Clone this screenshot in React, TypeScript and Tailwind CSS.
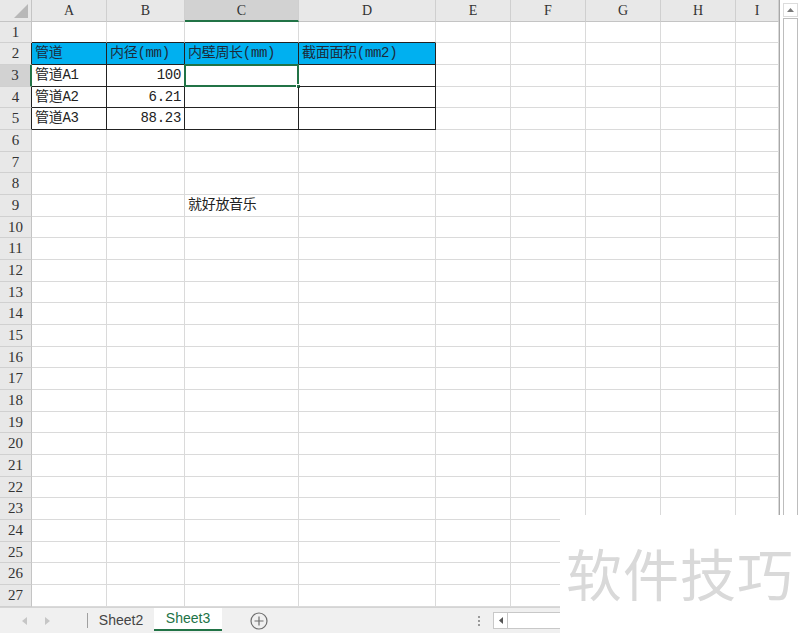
import React from "react";

const cols = [
  { id: "A", w: "w-[75px]" },
  { id: "B", w: "w-[78px]" },
  { id: "C", w: "w-[114px]" },
  { id: "D", w: "w-[137px]" },
  { id: "E", w: "w-[75px]" },
  { id: "F", w: "w-[75px]" },
  { id: "G", w: "w-[75px]" },
  { id: "H", w: "w-[75px]" },
  { id: "I", w: "w-[43px]" },
];

type Cell = { text: string; align?: "right" };

const data: Record<number, Record<string, Cell>> = {
  2: {
    A: { text: "管道" },
    B: { text: "内径(mm)" },
    C: { text: "内壁周长(mm)" },
    D: { text: "截面面积(mm2)" },
  },
  3: { A: { text: "管道A1" }, B: { text: "100", align: "right" } },
  4: { A: { text: "管道A2" }, B: { text: "6.21", align: "right" } },
  5: { A: { text: "管道A3" }, B: { text: "88.23", align: "right" } },
  9: { C: { text: "就好放音乐" } },
};

const font = "font-['Liberation_Serif','Noto_Sans_CJK_SC',serif]";
const cellFont = "font-['Liberation_Mono','Noto_Sans_CJK_SC',monospace]";
const tableCols = ["A", "B", "C", "D"];

function Row({ n }: { n: number }) {
  const h = n % 3 === 1 ? "h-[21px]" : "h-[22px]";
  const inTable = n >= 2 && n <= 5;
  const rowSelected = n === 3;
  return (
    <div className={`flex ${h}`}>
      <div
        className={`w-[32px] shrink-0 flex items-center justify-center text-[15px] text-[#333] border-b border-[#d0d0d0] ${
          rowSelected ? "bg-[#d2d2d2] border-r-2 border-r-[#217346]" : "bg-[#e8e8e8] border-r"
        } ${!rowSelected && inTable ? "border-r-[#222]" : !rowSelected ? "border-r-[#c4c4c4]" : ""}`}
      >
        {n}
      </div>
      {cols.map((c) => {
        const cell = data[n]?.[c.id];
        const isTable = inTable && tableCols.includes(c.id);
        const aboveTable = n === 1 && tableCols.includes(c.id);
        const isHead = n === 2 && isTable;
        const selected = n === 3 && c.id === "C";
        return (
          <div
            key={c.id}
            className={`${c.w} shrink-0 relative flex items-center px-[3px] text-[14px] tracking-[-0.3px] whitespace-nowrap border-r border-b ${cellFont} ${
              isTable ? "border-[#222]" : "border-[#dadada]"
            } ${aboveTable ? "border-b-[#222]" : ""} ${isHead ? "bg-[#00b0f0] text-[#1c2b3a]" : "text-[#222]"} ${
              cell?.align === "right" ? "justify-end" : ""
            }`}
          >
            {cell?.text}
            {selected && (
              <div className="absolute -left-px -top-px -right-px -bottom-px border-2 border-[#217346]">
                <div className="absolute -right-[4px] -bottom-[4px] w-[5px] h-[5px] bg-[#217346] border border-white" />
              </div>
            )}
          </div>
        );
      })}
    </div>
  );
}

export default function App() {
  const rows = Array.from({ length: 27 }, (_, i) => i + 1);
  return (
    <div className={`relative w-[800px] h-[633px] overflow-hidden bg-white ${font}`}>
      <div className="flex h-[607px]">
        <div className="w-[779px] shrink-0 overflow-hidden">
          {/* column headers */}
          <div className="flex h-[22px]">
            <div className="w-[32px] shrink-0 bg-[#e8e8e8] border-r border-b border-[#c4c4c4] relative">
              <svg className="absolute right-[3px] bottom-[3px]" width="14" height="14" viewBox="0 0 14 14">
                <polygon points="14,0 14,14 0,14" fill="#b8b8b8" />
              </svg>
            </div>
            {cols.map((c) => (
              <div
                key={c.id}
                className={`${c.w} shrink-0 flex items-center justify-center text-[14px] text-[#333] border-r border-[#cfcfcf] ${
                  c.id === "C" ? "bg-[#d2d2d2] border-b-2 border-b-[#217346]" : "bg-[#e8e8e8] border-b border-b-[#c4c4c4]"
                }`}
              >
                {c.id}
              </div>
            ))}
          </div>
          {rows.map((n) => (
            <Row key={n} n={n} />
          ))}
        </div>
        {/* vertical scrollbar */}
        <div className="flex-1 border-l border-[#a8a8a8] bg-white flex flex-col items-center pt-[3px] gap-[1px]">
          <div className="w-[15px] h-[14px] border border-[#dcdcdc] flex items-center justify-center">
            <svg width="7" height="4" viewBox="0 0 7 4">
              <polygon points="3.5,0 7,4 0,4" fill="#7a7a7a" />
            </svg>
          </div>
          <div className="w-[15px] flex-1 border border-[#bdbdbd] bg-white" />
        </div>
      </div>

      {/* sheet tabs */}
      <div className="flex items-stretch h-[26px] overflow-hidden bg-[#f0f0f0] border-t border-[#d4d4d4] font-['Liberation_Sans','Noto_Sans_CJK_SC',sans-serif]">
        <div className="w-[87px] shrink-0 flex items-center gap-[18px] pl-[22px]">
          <svg width="5" height="8" viewBox="0 0 5 8">
            <polygon points="5,0 5,8 0,4" fill="#c6c6c6" />
          </svg>
          <svg width="5" height="8" viewBox="0 0 5 8">
            <polygon points="0,0 0,8 5,4" fill="#c6c6c6" />
          </svg>
        </div>
        <div className="w-px shrink-0 my-[5px] bg-[#a0a0a0]" />
        <div className="w-[66px] shrink-0 flex items-center justify-center text-[14px] text-[#444]">Sheet2</div>
        <div className="w-[68px] shrink-0 flex items-center justify-center text-[14px] text-[#217346] bg-white border-b-2 border-[#217346] mb-[2px]">
          Sheet3
        </div>
        <div className="w-[74px] shrink-0 flex items-center justify-center">
          <svg width="18" height="18" viewBox="0 0 18 18" fill="none" stroke="#6e6e6e" strokeWidth="1.2">
            <circle cx="9" cy="9" r="8" />
            <path d="M9 4.5v9M4.5 9h9" />
          </svg>
        </div>
        <div className="w-[175px] shrink-0" />
        <div className="flex shrink-0 flex-col justify-center gap-[2px] w-[15px] items-center">
          <span className="w-[2px] h-[2px] bg-[#9a9a9a]" />
          <span className="w-[2px] h-[2px] bg-[#9a9a9a]" />
          <span className="w-[2px] h-[2px] bg-[#9a9a9a]" />
        </div>
        <div className="flex shrink-0 items-center pl-[7px]">
          <div className="w-[15px] h-[17px] bg-white border border-[#c8c8c8] flex items-center justify-center">
            <svg width="4" height="7" viewBox="0 0 4 7">
              <polygon points="4,0 4,7 0,3.5" fill="#555" />
            </svg>
          </div>
          <div className="w-[300px] h-[17px] bg-white border border-l-0 border-[#c8c8c8]" />
        </div>
      </div>

      {/* watermark */}
      <div className="absolute left-[560px] top-[515px] w-[240px] h-[118px] bg-white flex items-center pl-[6px] pb-[4px]">
        <span className="text-[56px] leading-none text-[#d9d9d9] font-['Noto_Sans_CJK_SC',sans-serif] tracking-[1px]">软件技巧</span>
      </div>
    </div>
  );
}
